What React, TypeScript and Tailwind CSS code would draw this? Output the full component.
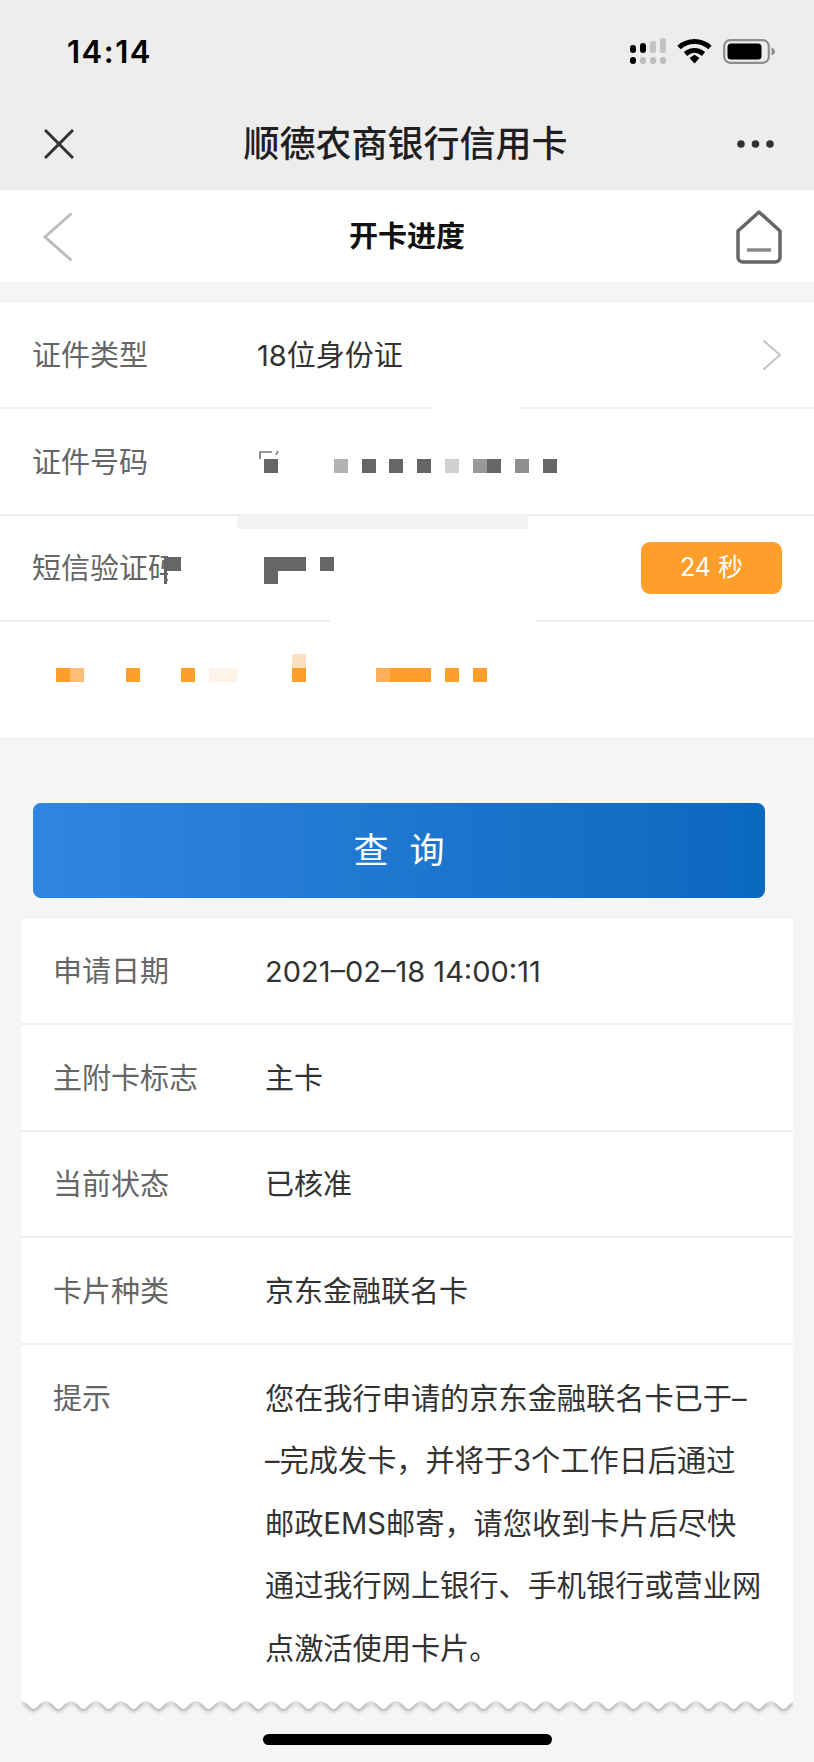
import React from "react";

type B = [number, number, number, number, string];
const blocks: B[] = [
  // separator gaps
  [431, 407, 88, 4, "#ffffff"],
  [237, 515, 291, 14, "#f3f3f6"],
  [330, 619, 205, 4, "#ffffff"],
  // masked id number
  [264, 459, 14, 14, "#666666"],
  [334, 459, 14, 14, "#b3b3b3"],
  [362, 459, 14, 14, "#666666"],
  [389, 459, 14, 14, "#666666"],
  [417, 459, 14, 14, "#666666"],
  [445, 459, 14, 14, "#d0d0d0"],
  [473, 459, 14, 14, "#999999"],
  [487, 459, 14, 14, "#666666"],
  [515, 459, 14, 14, "#8f8f8f"],
  [543, 459, 14, 14, "#666666"],
  // masked code
  [168, 540, 40, 50, "#ffffff"],
  [167, 557, 14, 14, "#666666"],
  [164, 557, 3, 27, "#666666"],
  [264, 557, 42, 14, "#666666"],
  [264, 571, 14, 13, "#666666"],
  [320, 557, 14, 14, "#666666"],
  // masked orange tip
  [56, 668, 14, 14, "#ff9f2b"],
  [70, 668, 14, 14, "#ffbd75"],
  [126, 668, 14, 14, "#ff9f2b"],
  [181, 668, 14, 14, "#ff9f2b"],
  [209, 668, 28, 14, "#fdf3e9"],
  [292, 654, 14, 14, "#fde0c0"],
  [292, 668, 14, 14, "#ff9f2b"],
  [376, 668, 14, 14, "#ffb05a"],
  [390, 668, 41, 14, "#ff9f2b"],
  [445, 668, 14, 14, "#ff9f2b"],
  [473, 668, 14, 14, "#ff9f2b"],
];

function FormRow({ label, children, right }: { label: string; children?: React.ReactNode; right?: React.ReactNode }) {
  return (
    <div className="flex h-[106.4px] items-center border-b-2 border-[#efefef] bg-white pl-[32px] pr-[32px]">
      <div className="w-[225px] shrink-0 pt-[2px] text-[29px] text-[#666666]">{label}</div>
      <div className="flex-1 pt-[2px] text-[29px] text-[#333333]">{children}</div>
      {right}
    </div>
  );
}

function InfoRow({ label, value }: { label: string; value: string }) {
  return (
    <div className="flex h-[106.4px] items-center border-b-2 border-[#efefef] pl-[32px]">
      <div className="w-[212px] shrink-0 pt-[2px] text-[29px] text-[#666666]">{label}</div>
      <div className="pt-[2px] text-[29px] text-[#333333]">{value}</div>
    </div>
  );
}

function Zigzag() {
  const period = 25;
  const teeth = Math.ceil(772 / period);
  let d = "M0 0 L0 1 ";
  for (let i = 0; i < teeth; i++) {
    const x = i * period;
    d += `Q${x + 3} 1 ${x + 6} 4 L${x + 10} 8 Q${x + 12.5} 10 ${x + 15} 8 L${x + 19} 4 Q${x + 22} 1 ${x + 25} 1 `;
  }
  d += `L${teeth * period} 0 Z`;
  return (
    <div className="h-[16px] w-[772px] overflow-hidden">
      <svg width="772" height="16" viewBox="0 0 772 16" className="block drop-shadow-[0_2px_2px_rgba(0,0,0,0.36)]">
        <path d={d} fill="#ffffff" />
      </svg>
    </div>
  );
}

export default function App() {
  return (
    <div className="relative flex h-[1762px] w-[814px] flex-col overflow-hidden bg-[#f5f5f5] font-['Inter','Noto_Sans_CJK_SC',sans-serif]">
      {/* status + wechat header */}
      <div className="relative h-[190px] shrink-0 bg-[#ededed]">
        <div className="flex h-[102px] items-center justify-between pl-[67px] pr-[38px]">
          <div className="text-[31px] font-semibold leading-none tracking-[1.5px] text-black">14:14</div>
          <div className="flex items-center">
            <svg width="37" height="27" viewBox="0 0 37 27" className="mr-[10px]">
              <rect x="0" y="19" width="6" height="7" rx="3" fill="#000" />
              <rect x="10" y="19" width="6" height="7" rx="3" fill="#bdbdbd" />
              <rect x="20" y="19" width="6" height="7" rx="3" fill="#bdbdbd" />
              <rect x="30" y="19" width="6" height="7" rx="3" fill="#bdbdbd" />
              <rect x="0" y="7" width="6" height="8" rx="3" fill="#000" />
              <rect x="10" y="5" width="6" height="10" rx="3" fill="#000" />
              <rect x="20" y="3" width="6" height="12" rx="2" fill="#c4c4c4" />
              <rect x="30" y="0" width="6" height="15" rx="2" fill="#c4c4c4" />
            </svg>
            <svg width="35" height="26" viewBox="0 0 35 26" className="mr-[11px]">
              <path d="M2 9.5C11 1.5 24 1.5 33 9.5" fill="none" stroke="#000" strokeWidth="5" />
              <path d="M8.5 16C14 11.3 21 11.3 26.5 16" fill="none" stroke="#000" strokeWidth="5" />
              <path d="M12.5 20L17.5 16.8L22.5 20L17.5 25.5Z" fill="#000" />
            </svg>
            <svg width="53" height="25" viewBox="0 0 53 25">
              <rect x="1.2" y="1.2" width="44.6" height="22.6" rx="6" fill="none" stroke="#8e8e8e" strokeWidth="2.2" />
              <rect x="4.5" y="4.5" width="34" height="16" rx="3.5" fill="#000" />
              <path d="M48.5 8.5C51 9.3 52 10.8 52 12.5C52 14.2 51 15.7 48.5 16.5Z" fill="#8e8e8e" />
            </svg>
          </div>
        </div>
        <div className="relative flex h-[84px] items-center justify-between pl-[44px] pr-[40px]">
          <svg width="30" height="30" viewBox="0 0 30 30">
            <path d="M1 1L29 29M29 1L1 29" stroke="#333" strokeWidth="3" fill="none" />
          </svg>
          <div className="absolute inset-0 flex items-center justify-center pr-[3px] text-[36px] font-medium leading-none text-[#1f1f1f]">
            顺德农商银行信用卡
          </div>
          <svg width="37" height="8" viewBox="0 0 37 8">
            <circle cx="4" cy="4" r="3.8" fill="#333" />
            <circle cx="18.5" cy="4" r="3.8" fill="#333" />
            <circle cx="33" cy="4" r="3.8" fill="#333" />
          </svg>
        </div>
      </div>

      {/* page nav */}
      <div className="relative flex h-[92px] shrink-0 items-center justify-between bg-white pl-[43px] pr-[32px] pt-[1px]">
        <svg width="30" height="50" viewBox="0 0 30 50">
          <path d="M28.5 1.5L2 25L28.5 48.5" fill="none" stroke="#bdbdbd" strokeWidth="3" />
        </svg>
        <div className="absolute inset-0 flex items-center justify-center text-[29px] font-bold leading-none text-[#111]">
          开卡进度
        </div>
        <svg width="46" height="54" viewBox="0 0 46 54">
          <path d="M23 2L44 21V47C44 50 42 52 39 52H7C4 52 2 50 2 47V21Z" fill="none" stroke="#666" strokeWidth="3.5" strokeLinejoin="round" />
          <path d="M11 40H35" stroke="#888" strokeWidth="3.5" />
        </svg>
      </div>

      <div className="mt-[21px] shrink-0">
        <FormRow
          label="证件类型"
          right={
            <svg width="20" height="32" viewBox="0 0 20 32">
              <path d="M1.5 1.5L18 16L1.5 30.5" fill="none" stroke="#c4c4c4" strokeWidth="2" />
            </svg>
          }
        >
          18位身份证
        </FormRow>
        <FormRow label="证件号码" />
        <FormRow
          label="短信验证码"
          right={
            <div className="flex h-[52px] w-[141px] items-center justify-center rounded-[9px] bg-[#ff9f2b] text-[25px] text-white">
              24 秒
            </div>
          }
        />
        <div className="h-[114.8px] bg-white" />
      </div>

      <div className="ml-[33px] mt-[66px] flex h-[95px] w-[732px] shrink-0 items-center justify-center rounded-[8px] bg-gradient-to-r from-[#2e86e0] to-[#0a68bf] text-[35px] tracking-[0.6em] text-white">
        <span className="pl-[0.6em]">查询</span>
      </div>

      <div className="ml-[21px] mt-[21px] w-[772px] shrink-0">
        <div className="bg-white">
          <InfoRow label="申请日期" value="2021–02–18 14:00:11" />
          <InfoRow label="主附卡标志" value="主卡" />
          <InfoRow label="当前状态" value="已核准" />
          <InfoRow label="卡片种类" value="京东金融联名卡" />
          <div className="flex h-[355.4px] pl-[32px] pt-[23px]">
            <div className="w-[212px] shrink-0 text-[29px] leading-[62.6px] text-[#666666]">提示</div>
            <div className="whitespace-nowrap text-[29.2px] leading-[62.6px] text-[#333333]">
              您在我行申请的京东金融联名卡已于–
              <br />
              –完成发卡，并将于3个工作日后通过
              <br />
              邮政EMS邮寄，请您收到卡片后尽快
              <br />
              通过我行网上银行、手机银行或营业网
              <br />
              点激活使用卡片。
            </div>
          </div>
        </div>
        <Zigzag />
      </div>

      <div className="ml-[263px] mt-[18px] h-[11px] w-[289px] shrink-0 rounded-full bg-black" />

      {/* mosaic masking over the form */}
      {blocks.map(([x, y, w, h, c], i) => (
        <div key={i} className="absolute" style={{ left: x, top: y, width: w, height: h, background: c }} />
      ))}
      <svg width="26" height="10" viewBox="0 0 26 10" className="absolute left-[258px] top-[450px]">
        <path d="M2 9V2H14M20 1L18 5" fill="none" stroke="#777" strokeWidth="1.6" />
      </svg>
    </div>
  );
}
